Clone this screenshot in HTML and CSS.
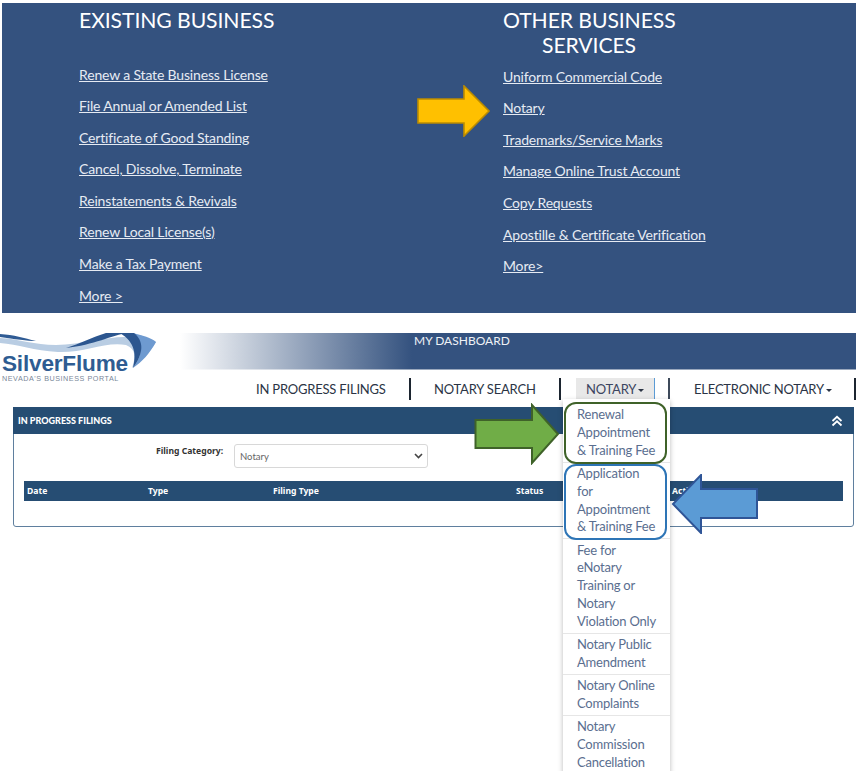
FILE: index.html
```html
<!DOCTYPE html>
<html lang="en">
<head>
<meta charset="utf-8">
<title>SilverFlume Notary</title>
<link rel="stylesheet" href="styles.css">
</head>
<body>
<div class="page">
  <section class="services">
    <div class="col col-existing">
      <h2 class="col-title">EXISTING BUSINESS</h2>
      <ul class="links links-existing">
        <li><a href="#">Renew a State Business License</a></li>
        <li><a href="#">File Annual or Amended List</a></li>
        <li><a href="#">Certificate of Good Standing</a></li>
        <li><a href="#">Cancel, Dissolve, Terminate</a></li>
        <li><a href="#">Reinstatements &amp; Revivals</a></li>
        <li><a href="#">Renew Local License(s)</a></li>
        <li><a href="#">Make a Tax Payment</a></li>
        <li><a href="#">More &gt;</a></li>
      </ul>
    </div>
    <div class="col col-other">
      <h2 class="col-title col-title-center">OTHER BUSINESS<br>SERVICES</h2>
      <ul class="links links-other">
        <li><a href="#">Uniform Commercial Code</a></li>
        <li><a href="#">Notary</a></li>
        <li><a href="#">Trademarks/Service Marks</a></li>
        <li><a href="#">Manage Online Trust Account</a></li>
        <li><a href="#">Copy Requests</a></li>
        <li><a href="#">Apostille &amp; Certificate Verification</a></li>
        <li><a href="#">More&gt;</a></li>
      </ul>
    </div>
  </section>

  <header class="brand-bar">
    <div class="logo">
      <svg class="logo-swoosh" width="158" height="36" viewBox="0 0 158 36" aria-hidden="true">
        <path d="M0 5C20 6 34 12 56 12C84 11 108 3 128 4C138 5 140 12 136 20C142 14 144 8 140 2L156 9C150 19 142 28 132 35C136 24 136 16 126 12C106 8 84 20 58 19C34 18 18 11 0 10Z" fill="#b9cde3"/>
        <path d="M0 1C14 2 24 5 36 8C28 8 14 6 0 4Z" fill="#2f5b94"/>
        <path d="M66 15C80 11 92 4 106 0H128C112 2 94 12 66 15Z" fill="#2c568f"/>
        <path d="M132 0C142 2 152 5 156 9C150 20 142 29 133 35C141 24 146 11 132 0Z" fill="#6e9ad0"/>
        <path d="M120 0H134C144 8 144 20 133 35C136 22 136 10 120 0Z" fill="#2c568f"/>
      </svg>
      <div class="logo-name">SilverFlume</div>
      <div class="logo-tag">NEVADA'S BUSINESS PORTAL</div>
    </div>
    <div class="band"><span class="band-title">MY DASHBOARD</span></div>
  </header>

  <nav class="nav">
    <a class="nav-item nav-progress" href="#">IN PROGRESS FILINGS</a>
    <a class="nav-item nav-search" href="#">NOTARY SEARCH</a>
    <span class="nav-slot"><a class="nav-item nav-notary" href="#">NOTARY<i class="caret"></i></a></span>
    <a class="nav-item nav-electronic" href="#">ELECTRONIC NOTARY<i class="caret"></i></a>
  </nav>

  <section class="panel">
    <div class="panel-head">
      <span class="panel-title">IN PROGRESS FILINGS</span>
      <svg class="chevrons" width="12" height="12" viewBox="0 0 12 12" aria-hidden="true">
        <path d="M1.5 6L6 1.8L10.5 6M1.5 10.5L6 6.3L10.5 10.5" fill="none" stroke="#fff" stroke-width="1.8"/>
      </svg>
    </div>
    <div class="panel-body">
      <div class="filter">
        <label class="filter-label">Filing Category:</label>
        <div class="select">
          <span>Notary</span>
          <svg width="9" height="6" viewBox="0 0 9 6" aria-hidden="true"><path d="M1 1L4.5 4.5L8 1" fill="none" stroke="#444" stroke-width="1.6"/></svg>
        </div>
      </div>
      <div class="table-head">
        <span class="th th-date">Date</span>
        <span class="th th-type">Type</span>
        <span class="th th-filing">Filing Type</span>
        <span class="th th-status">Status</span>
        <span class="th th-action">Action</span>
      </div>
    </div>
  </section>

  <ul class="dropdown">
    <li>Renewal<br>Appointment<br>&amp; Training Fee</li>
    <li>Application<br>for<br>Appointment<br>&amp; Training Fee</li>
    <li>Fee for<br>eNotary<br>Training or<br>Notary<br>Violation Only</li>
    <li>Notary Public<br>Amendment</li>
    <li>Notary Online<br>Complaints</li>
    <li>Notary<br>Commission<br>Cancellation</li>
  </ul>

  <div class="ring ring-green"></div>
  <div class="ring ring-blue"></div>

  <svg class="arrow arrow-yellow" width="74" height="52" viewBox="0 0 74 52" aria-hidden="true">
    <path d="M1 14H47V1L72 26L47 51V38H1Z" fill="#ffc000" stroke="#bc8c00" stroke-width="1.6"/>
  </svg>
  <svg class="arrow arrow-green" width="86" height="62" viewBox="0 0 86 62" aria-hidden="true">
    <path d="M1.5 17H58V2L84 31L58 60V45H1.5Z" fill="#70ad47" stroke="#3f6229" stroke-width="2"/>
  </svg>
  <svg class="arrow arrow-blue" width="88" height="60" viewBox="0 0 88 60" aria-hidden="true">
    <path d="M86 15H30V1L2 30L30 59V44H86Z" fill="#5b9bd5" stroke="#2f5597" stroke-width="2"/>
  </svg>
</div>
</body>
</html>
```
FILE: styles.css
```css
* { box-sizing: border-box; }
html, body { margin: 0; padding: 0; background: #fff; }
.page {
  position: relative;
  width: 856px;
  height: 771px;
  overflow: hidden;
  padding-top: 3px;
  font-family: Lato, "Liberation Sans", sans-serif;
}

/* Top services panel */
.services {
  display: flex;
  height: 310px;
  margin-left: 2px;
  background: #34527f;
  color: #fff;
}
.col-existing { width: 501px; padding-left: 77px; }
.col-other { flex: 1; }
.col-title {
  margin: 5px 0 0;
  font-size: 21.2px;
  line-height: 25px;
  font-weight: 400;
  letter-spacing: -0.1px;
  color: #fff;
  white-space: nowrap;
}
.col-title-center { width: 172px; text-align: center; }
.links { list-style: none; margin: 0; padding: 0; }
.links-existing { margin-top: 24.5px; }
.links-other { margin-top: 1.7px; }
.links li { height: 31.6px; line-height: 31.6px; }
.links a {
  font-size: 14px;
  color: #e6ebf3;
  text-decoration: underline;
  letter-spacing: -0.16px;
}

/* Brand bar */
.brand-bar {
  display: flex;
  height: 37px;
  margin-top: 20px;
}
.logo { position: relative; width: 180px; flex: none; }
.logo-swoosh { position: absolute; left: 0; top: 0; }
.logo-name {
  position: absolute;
  left: 2px;
  top: 21px;
  font-family: "Liberation Sans", sans-serif;
  font-weight: 700;
  font-size: 22.6px;
  line-height: 20px;
  letter-spacing: -0.2px;
  color: #2e5c92;
  white-space: nowrap;
}
.logo-tag {
  position: absolute;
  left: 2px;
  top: 42px;
  font-family: "Liberation Sans", sans-serif;
  font-size: 7.2px;
  line-height: 8px;
  letter-spacing: 0.55px;
  color: #7a8799;
  white-space: nowrap;
}
.band {
  flex: 1;
  padding-left: 234px;
  background: linear-gradient(90deg, #fff 0, #34527f 232px);
  border-bottom: 1px solid;
  border-image: linear-gradient(90deg, #fff, #9aa8bd 232px) 1;
}
.band-title { font-size: 12px; line-height: 16px; color: #eef1f6; display: block; }

/* Navigation */
.nav {
  display: flex;
  align-items: stretch;
  height: 22px;
  margin-top: 8px;
  padding-left: 243px;
  font-size: 13px;
  letter-spacing: -0.2px;
}
.nav-item {
  display: block;
  color: #2b3445;
  text-decoration: none;
  line-height: 22px;
  white-space: nowrap;
}
.nav-progress { width: 168px; padding-left: 13px; border-right: 2px solid #1c2530; }
.nav-search { width: 150px; padding-left: 23px; border-right: 2px solid #1c2530; }
.nav-slot {
  display: block;
  width: 109px;
  padding-left: 15px;
  border-right: 2px solid #3e4a5a;
}
.nav-notary {
  width: 79px;
  padding-left: 10px;
  background: #e8e8e8;
  border-right: 1px solid #5b9bd5;
  color: #3c4560;
}
.nav-electronic {
  width: 186px;
  padding-left: 24px;
  border-right: 2px solid #1c2530;
}
.caret {
  display: inline-block;
  width: 0;
  height: 0;
  margin-left: 2px;
  vertical-align: middle;
  border-top: 3px solid #2b3445;
  border-left: 3px solid transparent;
  border-right: 3px solid transparent;
}

/* Panel */
.panel {
  width: 841px;
  height: 120px;
  margin: 7px 0 0 13px;
  border: 1px solid #5f7f9e;
  border-radius: 3px;
}
.panel-head {
  display: flex;
  align-items: center;
  justify-content: space-between;
  height: 27px;
  margin: -1px -1px 0;
  padding: 0 11px 0 5px;
  background: #264d73;
}
.panel-title { font-size: 9px; font-weight: 900; color: #fff; }
.panel-body { padding: 0 10px; }
.filter {
  display: flex;
  align-items: flex-start;
  height: 47px;
  padding: 10px 0 0 132px;
}
.filter-label {
  width: 78px;
  font-family: "Noto Sans", sans-serif;
  font-size: 8.6px;
  font-weight: 700;
  line-height: 14px;
  color: #333;
  white-space: nowrap;
}
.select {
  display: flex;
  align-items: center;
  justify-content: space-between;
  width: 194px;
  height: 24px;
  padding: 0 4px 0 5px;
  border: 1px solid #d8d8d8;
  border-radius: 3px;
  font-size: 9.5px;
  color: #666;
}
.table-head {
  position: relative;
  height: 20px;
  background: #264d73;
}
.th {
  position: absolute;
  top: 0;
  font-family: "Noto Sans", sans-serif;
  font-size: 8.6px;
  font-weight: 700;
  line-height: 20px;
  color: #fff;
}
.th-date { left: 3px; }
.th-type { left: 124px; }
.th-filing { left: 249px; }
.th-status { left: 492px; }
.th-action { left: 648px; }

/* Dropdown menu */
.dropdown {
  position: absolute;
  left: 563px;
  top: 399px;
  width: 107px;
  margin: 0;
  padding: 7px 0 0;
  list-style: none;
  background: #fff;
  box-shadow: 0 2px 5px rgba(0, 0, 0, 0.28);
  font-size: 13px;
  letter-spacing: -0.2px;
  line-height: 17.85px;
  color: #5a6e8f;
}
.dropdown li {
  padding: 0 0 2px 14px;
  margin-bottom: 2.3px;
  border-bottom: 1px solid #e6e6e6;
  white-space: nowrap;
}

/* Annotations */
.ring {
  position: absolute;
  left: 564px;
  width: 103px;
  border-radius: 12px;
  border-style: solid;
  border-width: 2px;
}
.ring-green { top: 402px; height: 62px; border-color: #3f6229; }
.ring-blue { top: 464px; height: 76px; border-color: #2e75b6; }
.arrow { position: absolute; }
.arrow-yellow { left: 417px; top: 85px; }
.arrow-green { left: 474px; top: 403px; }
.arrow-blue { left: 671px; top: 474px; }
```
